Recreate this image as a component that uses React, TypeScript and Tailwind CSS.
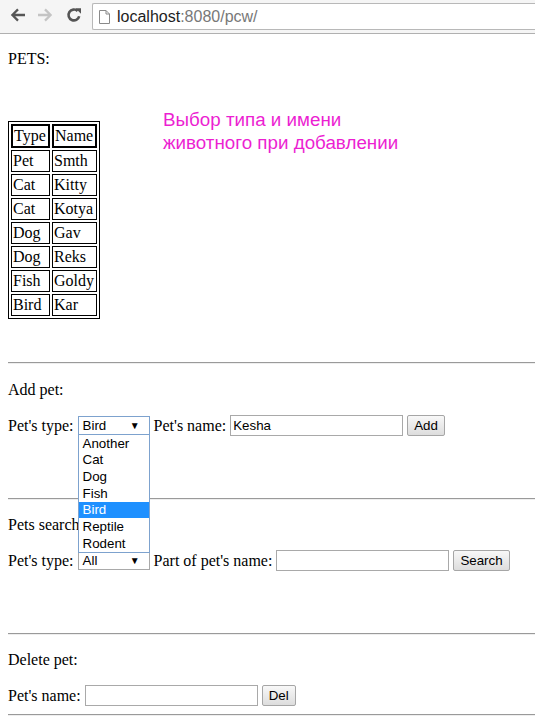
import React from "react";

const serif = { fontFamily: '"Liberation Serif", "Times New Roman", serif' };
const sans = { fontFamily: '"Liberation Sans", Arial, sans-serif' };

function Hr() {
  return <div className="ml-[8px] h-0 border-t border-b border-t-[#9a9a9a] border-b-[#eeeeee]" />;
}

function FakeSelect({ value, focused, open }: { value: string; focused?: boolean; open?: boolean }) {
  const items = ["Another", "Cat", "Dog", "Fish", "Bird", "Reptile", "Rodent"];
  return (
    <div className="relative shrink-0">
      <div
        className={`flex h-[19px] w-[72px] items-center justify-between border bg-white pl-[4px] pr-[9px] text-[13.33px] leading-[15px] text-black ${
          focused ? "border-[#7da2ce]" : "border-[#a9a9a9]"
        }`}
        style={sans}
      >
        <span>{value}</span>
        <span className="text-[10px] leading-none">▼</span>
      </div>
      {open && (
        <div className="absolute left-0 top-[18px] z-10 w-[72px] border border-[#7da2ce] bg-white" style={sans}>
          {items.map((it) => (
            <div
              key={it}
              className={`flex h-[16.67px] items-center pl-[4px] text-[13.33px] leading-[15px] ${
                it === value ? "bg-[#1e90ff] text-white" : "text-black"
              }`}
            >
              {it}
            </div>
          ))}
        </div>
      )}
    </div>
  );
}

function TextInput({ value }: { value?: string }) {
  return (
    <div
      className="flex h-[21px] w-[173px] shrink-0 items-center border border-[#a9a9a9] bg-white pl-[2px] text-[13.33px] text-black"
      style={sans}
    >
      {value}
    </div>
  );
}

function Btn({ label }: { label: string }) {
  return (
    <div
      className="flex h-[21px] shrink-0 items-center rounded-[2px] border border-[#a6a6a6] bg-gradient-to-b from-[#f8f8f8] to-[#dddddd] px-[6px] text-[13.33px] text-black"
      style={sans}
    >
      {label}
    </div>
  );
}

export default function App() {
  const rows: [string, string][] = [
    ["Pet", "Smth"],
    ["Cat", "Kitty"],
    ["Cat", "Kotya"],
    ["Dog", "Gav"],
    ["Dog", "Reks"],
    ["Fish", "Goldy"],
    ["Bird", "Kar"],
  ];
  return (
    <div className="min-h-[725px] w-[535px] overflow-hidden bg-white text-black">
      {/* browser toolbar */}
      <div className="flex h-[34px] items-start border-b border-[#b0b0b0] bg-[#f5f5f5]">
        <div className="flex h-[30px] items-center pl-[10px]">
          <svg width="16" height="16" viewBox="0 0 16 16">
            <path d="M15 6.8H5.2l3.6-3.6L7.2 1.6 0.8 8l6.4 6.4 1.6-1.6-3.6-3.6H15z" fill="#555" />
          </svg>
          <svg className="ml-[11px]" width="16" height="16" viewBox="0 0 16 16">
            <path d="M1 6.8h9.8L7.2 3.2l1.6-1.6L15.2 8l-6.4 6.4-1.6-1.6 3.6-3.6H1z" fill="#c4c4c4" />
          </svg>
          <svg className="ml-[13px]" width="16" height="16" viewBox="0 0 16 16">
            <path d="M13.2 9.2A5.4 5.4 0 1 1 11.6 4" fill="none" stroke="#555" strokeWidth="2.6" />
            <path d="M9.4 1.2h5.6v5.6z" fill="#555" />
          </svg>
        </div>
        <div className="ml-[10px] mt-[3px] flex h-[27px] flex-1 items-center rounded-l-[2px] border border-r-0 border-[#b8b8b8] bg-white">
          <svg className="ml-[6px]" width="11" height="14" viewBox="0 0 11 14">
            <path d="M0.5 0.5h6.5l3.5 3.5v9.5h-10z" fill="#fff" stroke="#8a8a8a" />
            <path d="M7 0.5v3.5h3.5" fill="none" stroke="#8a8a8a" />
          </svg>
          <span className="ml-[7px] text-[16px] leading-[18px]" style={sans}>
            <span className="text-[#1e1e1e]">localhost</span>
            <span className="text-[#787878]">:8080/pcw/</span>
          </span>
        </div>
      </div>

      {/* page */}
      <div className="text-[16px] leading-[18px]" style={serif}>
        <p className="ml-[8px] mt-[16px]">PETS:</p>

        <div className="ml-[8px] mt-[40px] flex items-start">
          <table className="mt-[13px] border-separate border-spacing-[2px] border border-black">
            <thead>
              <tr>
                <th className="min-w-[39px] border-2 border-black p-[1px] text-left font-normal leading-[18px]">Type</th>
                <th className="min-w-[45px] border-2 border-black p-[1px] text-left font-normal leading-[18px]">Name</th>
              </tr>
            </thead>
            <tbody>
              {rows.map(([t, n], i) => (
                <tr key={i}>
                  <td className="border border-black p-[1px] leading-[18px]">{t}</td>
                  <td className="border border-black p-[1px] leading-[18px]">{n}</td>
                </tr>
              ))}
            </tbody>
          </table>
          <div className="ml-[63px] text-[18.8px] leading-[23px] text-[#ec1fd2]" style={sans}>
            <div>Выбор типа и имени</div>
            <div>животного при добавлении</div>
          </div>
        </div>

        <div className="mt-[43px]">
          <Hr />
        </div>
        <p className="ml-[8px] mt-[17px]">Add pet:</p>
        <div className="ml-[8px] mt-[16px] flex h-[21px] items-center gap-[4px]">
          <span>Pet's type:</span>
          <FakeSelect value="Bird" focused open />
          <span>Pet's name:</span>
          <TextInput value="Kesha" />
          <Btn label="Add" />
        </div>

        <div className="mt-[62px]">
          <Hr />
        </div>
        <p className="ml-[8px] mt-[16px]">Pets search:</p>
        <div className="ml-[8px] mt-[16px] flex h-[21px] items-center gap-[4px]">
          <span>Pet's type:</span>
          <FakeSelect value="All" />
          <span>Part of pet's name:</span>
          <TextInput />
          <Btn label="Search" />
        </div>

        <div className="mt-[62px]">
          <Hr />
        </div>
        <p className="ml-[8px] mt-[16px]">Delete pet:</p>
        <div className="ml-[8px] mt-[16px] flex h-[21px] items-center gap-[4px]">
          <span>Pet's name:</span>
          <TextInput />
          <Btn label="Del" />
        </div>
        <div className="mt-[8px]">
          <Hr />
        </div>
      </div>
    </div>
  );
}
